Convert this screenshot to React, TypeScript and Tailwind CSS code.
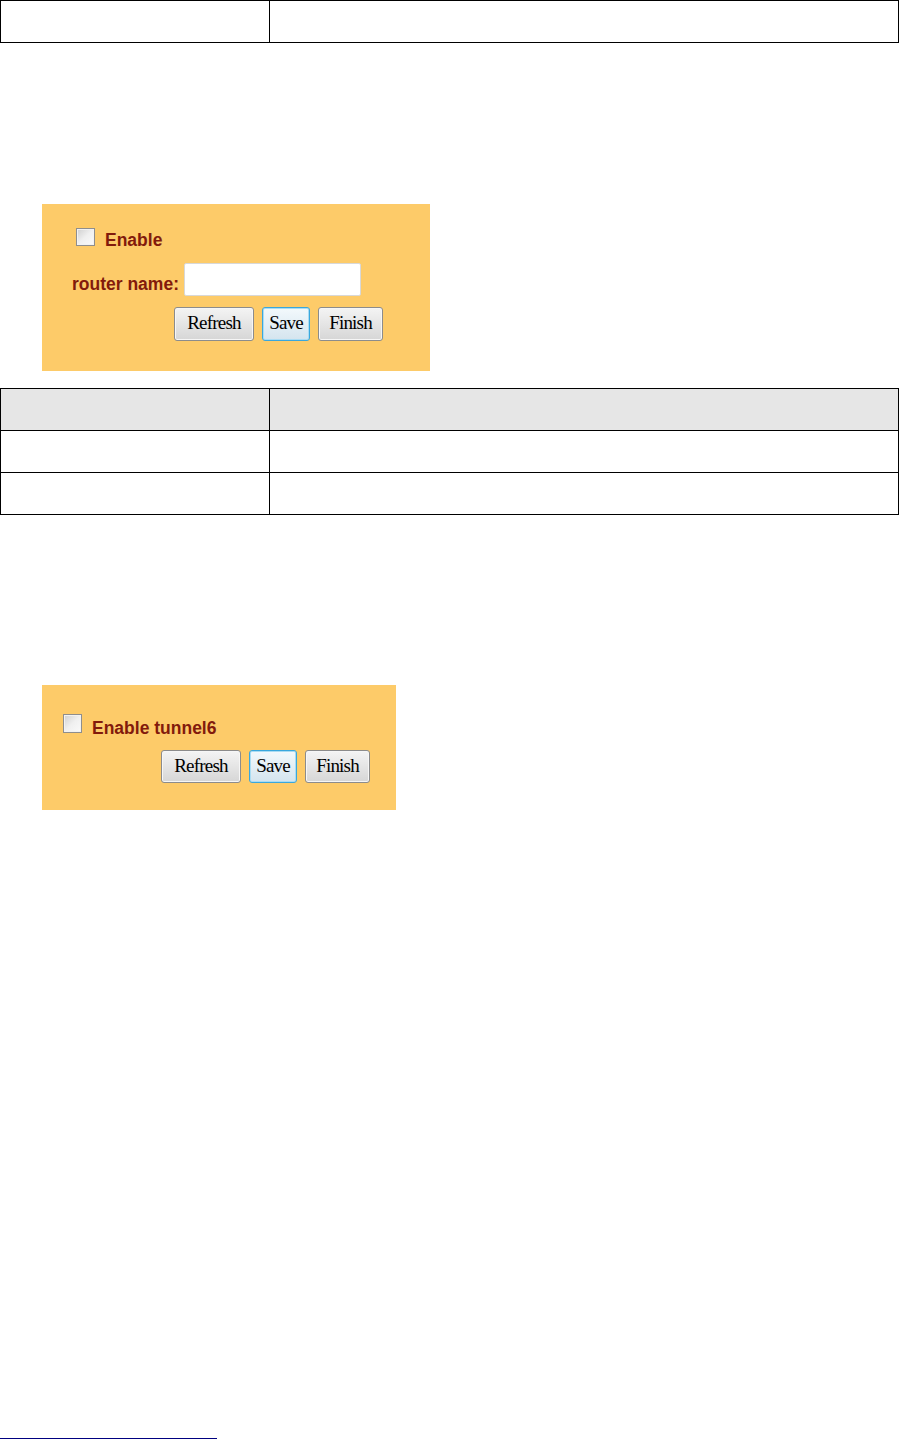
import React from "react";

function Checkbox({ size }: { size: string }) {
  return (
    <div
      className={`${size} shrink-0 border border-[#8e8e8e] bg-gradient-to-br from-[#cfcfcf] via-[#f0f0f0] to-[#fafafa] shadow-[inset_0_0_0_1px_#f2f2f2]`}
    />
  );
}

function Btn({ label, w, h, focus }: { label: string; w: string; h: string; focus?: boolean }) {
  return (
    <button
      className={`${w} ${h} flex items-center justify-center pb-[3px] rounded-[3px] border ${
        focus
          ? "border-[#3aa7dd] shadow-[inset_0_0_0_1px_#a9dcf3] bg-gradient-to-b from-[#f3f9fc] to-[#d4e4ee]"
          : "border-[#8c8c8c] shadow-[inset_0_0_0_1px_#f6f6f6] bg-gradient-to-b from-[#f4f4f4] to-[#d6d6d6]"
      } text-[19px] leading-none tracking-[-0.8px] text-black font-['Liberation_Serif',serif]`}
    >
      {label}
    </button>
  );
}

function Row({ bg }: { bg?: string }) {
  return (
    <div className={`grid grid-cols-[269px_1fr] h-[41px] ${bg ?? ""}`}>
      <div className="border-r border-black" />
      <div />
    </div>
  );
}

export default function App() {
  const label =
    "font-['Liberation_Sans',Arial,sans-serif] font-bold text-[17.5px] leading-[18px] text-[#821a0c] whitespace-nowrap";
  return (
    <div className="w-[900px] h-[1439px] bg-white flex flex-col">
      {/* top table */}
      <div className="w-[899px] border border-black">
        <Row />
      </div>

      {/* panel 1 */}
      <div className="mt-[161px] ml-[42px] w-[388px] h-[168px] bg-[#fdcb69] flex flex-col">
        <div className="mt-[24px] ml-[34px] flex items-start gap-[10px]">
          <Checkbox size="w-[19px] h-[18px]" />
          <span className={`${label} mt-[3px]`}>Enable</span>
        </div>
        <div className="mt-[14px] ml-[30px] flex items-start gap-[5px]">
          <span className={`${label} mt-[12px]`}>router name:</span>
          <div className="w-[177px] h-[33px] bg-white border border-[#d8d8d8] rounded-[2px]" />
        </div>
        <div className="mt-[11px] ml-[132px] flex gap-[8px]">
          <Btn label="Refresh" w="w-[80px]" h="h-[34px]" />
          <Btn label="Save" w="w-[48px]" h="h-[34px]" focus />
          <Btn label="Finish" w="w-[65px]" h="h-[34px]" />
        </div>
      </div>

      {/* second table */}
      <div className="mt-[17px] w-[899px] border border-black flex flex-col">
        <Row bg="bg-[#e6e6e6]" />
        <div className="border-t border-black">
          <Row />
        </div>
        <div className="border-t border-black">
          <Row />
        </div>
      </div>

      {/* panel 2 */}
      <div className="mt-[170px] ml-[42px] w-[354px] h-[125px] bg-[#fdcb69] flex flex-col">
        <div className="mt-[29px] ml-[21px] flex items-start gap-[10px]">
          <Checkbox size="w-[19px] h-[19px]" />
          <span className={`${label} mt-[5px]`}>Enable tunnel6</span>
        </div>
        <div className="mt-[13px] ml-[119px] flex gap-[8px]">
          <Btn label="Refresh" w="w-[80px]" h="h-[33px]" />
          <Btn label="Save" w="w-[48px]" h="h-[33px]" focus />
          <Btn label="Finish" w="w-[65px]" h="h-[33px]" />
        </div>
      </div>

      {/* footnote rule */}
      <div className="mt-[628px] w-[217px] h-[1px] bg-[#000080]" />
    </div>
  );
}
